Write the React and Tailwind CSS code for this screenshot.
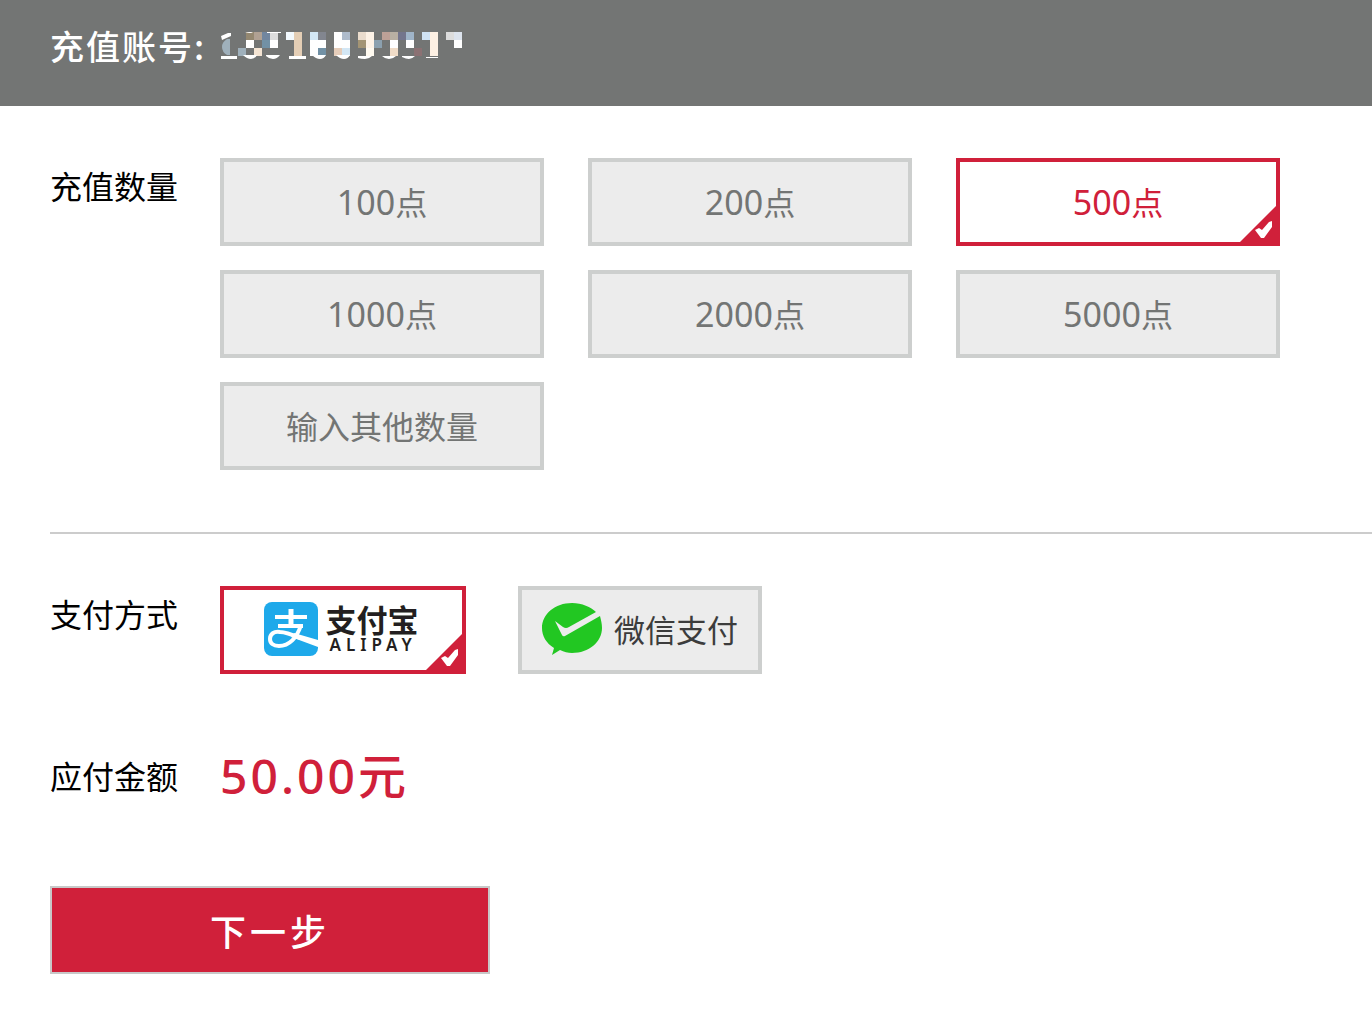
import React, { useState } from 'react';

const amounts = [
  { value: 100, num: '100', text: '点' },
  { value: 200, num: '200', text: '点' },
  { value: 500, num: '500', text: '点' },
  { value: 1000, num: '1000', text: '点' },
  { value: 2000, num: '2000', text: '点' },
  { value: 5000, num: '5000', text: '点' },
  { value: 'other', num: '', text: '输入其他数量' }
];

// 8px cells that hide the account number: [column, row, colour]
const mosaic = [
  [2, 2, '#9fb0bb'], [3, 0, '#948871'], [3, 1, '#ffffff'], [4, 0, '#b0a193'], [4, 2, '#f4e4d3'],
  [5, 0, '#71869f'], [5, 1, '#7291a5'], [6, 0, '#dddddd'], [6, 1, '#ffffff'],
  [8, 0, '#f3faff'], [9, 0, '#e4ceb5'], [9, 1, '#e4ceb5'], [9, 2, '#e4ceb5'],
  [11, 0, '#d3e7f5'], [11, 1, '#ffffff'], [11, 2, '#ffffff'], [12, 0, '#82868f'], [12, 1, '#ffffff'], [12, 2, '#7291a5'],
  [14, 0, '#ffffff'], [14, 1, '#ffffff'], [14, 2, '#e5cdba'], [15, 0, '#aebbcb'], [15, 1, '#ffffff'], [15, 2, '#d3e7f5'],
  [17, 0, '#eadccd'], [17, 1, '#a39474'], [18, 0, '#fdf2e6'], [18, 1, '#fdf2e6'], [18, 2, '#fffaf0'], [19, 1, '#8ba0af'],
  [20, 0, '#bda197'], [21, 0, '#b8b0a3'], [21, 1, '#ffffff'], [21, 2, '#f0dcc7'],
  [22, 0, '#73758c'], [23, 0, '#9fb4c8'], [23, 1, '#ffffff'], [24, 2, '#8b7173'],
  [25, 0, '#d0e2f3'], [26, 0, '#fdf0e3'], [26, 1, '#fdf0e3'], [26, 2, '#fdf0e3'],
  [28, 0, '#dcdcdc'], [29, 0, '#dce3ed'], [29, 1, '#ffffff']
];

function MaskedAccount() {
  return (
    <svg width="244" height="30" viewBox="0 0 244 30" role="img" aria-label="充值账号已隐藏">
      <path d="M10 7v16H7q-5-3-5-8t5-8z" fill="#9fb0bb" />
      {mosaic.map(([col, row, fill]) => (
        <rect key={`${col}-${row}`} x={col * 8 + 2} y={row * 8} width="8" height="8" fill={fill} shapeRendering="crispEdges" />
      ))}
      <path d="M1 4l7-3h3v3L2 8zM1 24h16v3H1zM69 24h17v3H69zM206 25h12v1h-12zM25 1q6-2 8 0zM47 0h14v1H47z" fill="#fff" />
      <path
        d="M23 23h14q-2 4-6 4t-8-4zM46 23h14q-3 4-7 4t-7-3zM92 23h14q-2 4-6 4t-8-4zM116 23h14q-2 4-6 4t-8-4zM138 24h14q-3 3-7 3t-7-1zM162 24h14q-3 3-7 3t-7-3zM182 24h13q-3 3-6 3t-7-2z"
        fill="#fff"
      />
    </svg>
  );
}

function CheckCorner() {
  return (
    <svg className="absolute -right-1 -bottom-1 hidden peer-checked:block" width="44" height="44" viewBox="0 0 44 44" aria-hidden="true">
      <path d="M44 0V44H0Z" fill="#d0203a" />
      <path d="M19 28l4-2 3 2 7-8 3-1v6L28 36h-3z" fill="#fff" />
    </svg>
  );
}

function AlipayLogo() {
  return (
    <span className="flex items-center gap-2 pr-1">
      <svg width="54" height="54" viewBox="0 0 54 54" aria-hidden="true">
        <rect width="54" height="54" rx="8" fill="#1ea9ea" />
        <g fill="none" stroke="#fff" strokeWidth="4">
          <path d="M11 15H43M14 24H39" />
          <path d="M27 7v18" strokeWidth="5" />
          <path d="M37 23c-4 13-12 21-22 21-6 0-9-3-9-7 0-5 4-8 10-7 6 0 13 3 20 6" />
        </g>
        <path d="M30 31l24 7v7c-9-3-18-7-27-10z" fill="#fff" />
      </svg>
      <span className="flex flex-col gap-1 text-[#231f20]">
        <span className="text-[31px] leading-7 font-bold">支付宝</span>
        <span className="pl-1 font-['Noto_Sans'] text-[17px] leading-4 font-semibold tracking-[5px]">ALIPAY</span>
      </span>
    </span>
  );
}

function WechatLogo() {
  return (
    <span className="flex items-center gap-3">
      <svg width="60" height="52" viewBox="0 0 60 52" aria-hidden="true">
        <path
          d="M30 0C13 0 0 11 0 25c0 8 4 15 12 20l-2 7 8-5c4 2 8 3 12 3 17 0 30-11 30-25 0-4-1-8-2-12L23 33q-2 1-3-1L13 18l8 6q3 2 6 0L54 9C49 4 40 0 30 0Z"
          fill="#22c722"
        />
      </svg>
      <span className="text-[31px] leading-8 text-[#3c3c3c]">微信支付</span>
    </span>
  );
}

function Option({ name, value, checked, onChange, children }) {
  return (
    <label className="relative flex h-22 cursor-pointer items-center justify-center border-4 border-[#cdcfce] bg-[#ececec] pb-0.5 text-[#737574] has-checked:border-[#d0203a] has-checked:bg-white has-checked:text-[#d0203a]">
      <input type="radio" name={name} value={value} checked={checked} onChange={onChange} className="peer sr-only" />
      {children}
      <CheckCorner />
    </label>
  );
}

export default function App() {
  const [amount, setAmount] = useState(500);
  const [payment, setPayment] = useState('alipay');

  const price = amount === 'other' ? 0 : amount / 10;

  return (
    <div className="min-h-screen bg-white font-['Noto_Sans_CJK_SC',sans-serif] text-[32px] leading-12 text-black">
      <header className="flex bg-[#737574] px-[50px] pt-[22px] pb-9 font-medium text-white">
        <span className="w-[170px] shrink-0 text-[34px] tracking-[2px] whitespace-nowrap">充值账号:</span>
        <span className="pt-[10px]">
          <MaskedAccount />
        </span>
      </header>

      <form className="pl-[50px]" onSubmit={(event) => event.preventDefault()}>
        <div role="radiogroup" aria-labelledby="amount-label" className="flex border-b-2 border-[#cccccc] pt-13 pb-[62px]">
          <span id="amount-label" className="w-[170px] shrink-0 pt-[3px]">充值数量</span>
          <div className="mr-[92px] grid flex-1 grid-cols-3 gap-x-11 gap-y-6">
            {amounts.map((item) => (
              <Option key={item.value} name="amount" value={item.value} checked={amount === item.value} onChange={() => setAmount(item.value)}>
                <span>
                  {item.num && <span className="font-['Noto_Sans'] text-[34px]">{item.num}</span>}
                  {item.text}
                </span>
              </Option>
            ))}
          </div>
        </div>

        <div role="radiogroup" aria-labelledby="payment-label" className="flex pt-13">
          <span id="payment-label" className="w-[170px] shrink-0 pt-[3px]">支付方式</span>
          <div className="grid grid-cols-[246px_244px] gap-x-[52px]">
            <Option name="payment" value="alipay" checked={payment === 'alipay'} onChange={() => setPayment('alipay')}>
              <AlipayLogo />
            </Option>
            <Option name="payment" value="wechat" checked={payment === 'wechat'} onChange={() => setPayment('wechat')}>
              <WechatLogo />
            </Option>
          </div>
        </div>

        <div className="flex items-center pt-[69px]">
          <span className="w-[170px] shrink-0">应付金额</span>
          <output className="text-[48px] leading-15 font-medium tracking-[3px] text-[#d0203a]">
            <span className="font-['Noto_Sans']">{price.toFixed(2)}</span>元
          </output>
        </div>

        <button type="submit" className="mt-20 mb-10 h-22 w-[440px] cursor-pointer border-2 border-[#c8c8c8] bg-[#d0203a] text-[36px] font-medium tracking-[4px] text-white">
          下一步
        </button>
      </form>
    </div>
  );
}
